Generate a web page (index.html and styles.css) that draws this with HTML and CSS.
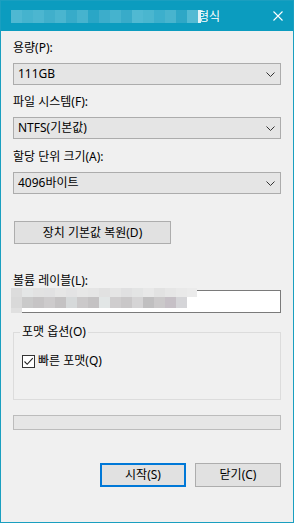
FILE: index.html
```html
<!DOCTYPE html>
<html lang="ko">
<head>
<meta charset="utf-8">
<title>형식</title>
<link rel="stylesheet" href="styles.css">
</head>
<body>
<div class="window">
  <div class="titlebar">
    <div class="blur-title"></div>
    <span class="title">형식</span>
    <svg class="close" width="10" height="10" viewBox="0 0 10 10"><path d="M0.5 0.5 L9.5 9.5 M9.5 0.5 L0.5 9.5" stroke="#fff" stroke-width="1.1" fill="none"/></svg>
  </div>
  <div class="content">
    <div class="label first">용량(P):</div>
    <div class="combo"><span>111GB</span><svg class="chev" width="9" height="5" viewBox="0 0 9 5"><path d="M0.5 0.5 L4.5 4.5 L8.5 0.5" stroke="#333" stroke-width="1" fill="none"/></svg></div>

    <div class="label">파일 시스템(F):</div>
    <div class="combo"><span>NTFS(기본값)</span><svg class="chev" width="9" height="5" viewBox="0 0 9 5"><path d="M0.5 0.5 L4.5 4.5 L8.5 0.5" stroke="#333" stroke-width="1" fill="none"/></svg></div>

    <div class="label third">할당 단위 크기(A):</div>
    <div class="combo"><span>4096바이트</span><svg class="chev" width="9" height="5" viewBox="0 0 9 5"><path d="M0.5 0.5 L4.5 4.5 L8.5 0.5" stroke="#333" stroke-width="1" fill="none"/></svg></div>

    <button class="btn restore">장치 기본값 복원(D)</button>

    <div class="label vol">볼륨 레이블(L):</div>
    <div class="input-wrap">
      <div class="textbox"></div>
      <div class="blur-input">
        <div class="row r1"></div>
        <div class="row r2"></div>
        <div class="row r3"></div>
      </div>
    </div>

    <div class="group">
      <span class="group-title">포맷 옵션(O)</span>
      <div class="check-row">
        <span class="checkbox"><svg width="11" height="11" viewBox="0 0 11 11"><path d="M1.5 5.5 L4.2 8.3 L9.8 2.2" stroke="#222" stroke-width="1.1" fill="none"/></svg></span>
        <span>빠른 포맷(Q)</span>
      </div>
    </div>

    <div class="progress"></div>

    <div class="actions">
      <button class="btn default">시작(S)</button>
      <button class="btn">닫기(C)</button>
    </div>
  </div>
</div>
</body>
</html>
```

FILE: styles.css
```css
* { box-sizing: border-box; }
html, body { margin: 0; padding: 0; background: #f0f0f0; }
body {
  font-family: "Noto Sans", "Noto Sans CJK KR", sans-serif;
  font-size: 12px;
  color: #000;
}
.window {
  width: 294px;
  height: 523px;
  border: 1px solid #1a9fc0;
  background: #f0f0f0;
  display: flex;
  flex-direction: column;
}
.titlebar {
  position: relative;
  height: 30px;
  background: #0b9cbf;
  display: flex;
  align-items: center;
  padding-left: 197px;
  flex-shrink: 0;
}
.title {
  color: #fff;
  font-size: 12px;
  line-height: 16px;
  font-family: "Noto Sans CJK KR", sans-serif;
}
.close {
  margin-left: auto;
  margin-right: 10px;
}
.blur-title {
  position: absolute;
  left: 10px;
  top: 9px;
  width: 190px;
  height: 13px;
  background: linear-gradient(to right,
    #4fb8d2 0 11px, #45b3ce 11px 22px, #4cb6d0 22px 33px, #40afcb 33px 44px,
    #4ab5cf 44px 55px, #37abc9 55px 66px, #46b3ce 66px 77px, #2aa6c6 77px 88px,
    #3cadcb 88px 99px, #45b3ce 99px 110px, #38abc9 110px 121px, #50b9d2 121px 132px,
    #4ab6cf 132px 143px, #3cafcc 143px 154px, #48b4ce 154px 165px, #2ea7c6 165px 176px,
    #52bad3 176px 187px, #e3f3f7 187px 190px);
}
.content {
  flex: 1;
  padding: 0 12px;
  display: flex;
  flex-direction: column;
  align-items: stretch;
}
.label {
  line-height: 16px;
  height: 16px;
  margin-top: 9px;
  margin-bottom: 7px;
  white-space: nowrap;
}
.label.third { margin-top: 10px; }
.combo {
  height: 22px;
  border: 1px solid #acacac;
  background: #e5e5e5;
  display: flex;
  align-items: center;
  padding: 0 5px 0 4px;
  line-height: 16px;
}
.combo span { flex: 1; }
.chev { display: block; }
.btn {
  font-family: "Noto Sans", "Noto Sans CJK KR", sans-serif;
  font-size: 12px;
  color: #000;
  background: #e1e1e1;
  border: 1px solid #adadad;
  padding: 0;
  margin: 0;
  line-height: 16px;
}
.restore {
  align-self: flex-start;
  margin-top: 27px;
  margin-left: 1px;
  width: 157px;
  height: 23px;
}
.label.vol {
  margin-top: 29px;
  margin-bottom: 1px;
}
.input-wrap {
  position: relative;
  height: 23px;
}
.textbox {
  height: 23px;
  background: #fff;
  border: 1px solid #7a7a7a;
}
.blur-input {
  position: absolute;
  left: -2px;
  top: -2px;
}
.blur-input .row { height: 9px; }
.blur-input .r1 {
  width: 186px;
  background: linear-gradient(to right,
    #dcdcdc 0 11px, #e4e6e6 11px 22px, #e2e2e2 22px 33px, #e1e1e2 33px 44px,
    #e6e6e6 44px 55px, #e3e3e4 55px 66px, #e7e7e7 66px 77px, #e5e5e5 77px 88px,
    #e1e1e1 88px 99px, #e5e5e5 99px 110px, #e0e0e1 110px 121px, #e3e4e4 121px 132px,
    #e8e8e8 132px 143px, #e2e2e2 143px 154px, #e6e6e6 154px 165px, #e9e9e9 165px 176px,
    #ebebeb 176px 186px);
}
.blur-input .r2 {
  height: 11px;
  width: 176px;
  background: linear-gradient(to right,
    #d9d9d9 0 11px, #cacaca 11px 22px, #c6c4c5 22px 33px, #cdcbcc 33px 44px,
    #c4c2c3 44px 55px, #d6d9da 55px 66px, #cbc9ca 66px 77px, #c4c2c3 77px 88px,
    #e2e6e6 88px 99px, #cfcdce 99px 110px, #c9c7c8 110px 121px, #d5d4d5 121px 132px,
    #c0bfc0 132px 143px, #cbc9ca 143px 154px, #c6c0c6 154px 165px, #d5d5d8 165px 176px);
}
.blur-input .r3 {
  height: 5px;
  width: 11px;
  background: #e0e0e0;
}
.group {
  margin-top: 19px;
  height: 68px;
  border: 1px solid #dcdcdc;
  padding: 0 8px;
  display: flex;
  flex-direction: column;
  align-items: flex-start;
}
.group-title {
  margin-top: -9px;
  margin-left: -2px;
  padding: 0 2px;
  background: #f0f0f0;
  line-height: 16px;
  height: 16px;
}
.check-row {
  margin-top: 13px;
  display: flex;
  align-items: center;
  height: 16px;
  line-height: 16px;
}
.checkbox {
  width: 13px;
  height: 13px;
  border: 1px solid #333;
  background: #fff;
  margin-right: 3px;
  display: flex;
  align-items: center;
  justify-content: center;
}
.checkbox svg { display: block; }
.progress {
  margin-top: 15px;
  height: 15px;
  border: 1px solid #bcbcbc;
  background: #e6e6e6;
}
.actions {
  margin-top: 33px;
  display: flex;
  justify-content: flex-end;
  gap: 9px;
}
.actions .btn {
  width: 86px;
  height: 24px;
}
.btn.default {
  border: 2px solid #0078d7;
}
```
